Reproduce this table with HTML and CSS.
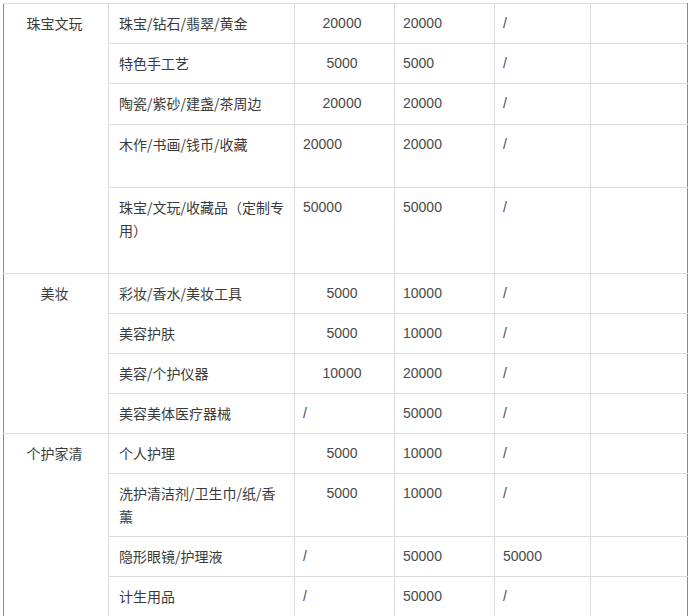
FILE: index.html
```html
<!DOCTYPE html>
<html lang="zh-CN">
<head>
<meta charset="utf-8">
<title>类目保证金</title>
<link rel="stylesheet" href="styles.css">
</head>
<body>
<div class="wrap">
<table class="tbl">
  <colgroup>
    <col class="c1"><col class="c2"><col class="c3"><col class="c4"><col class="c5"><col class="c6">
  </colgroup>
  <tbody>
    <tr>
      <td class="cat" rowspan="5">珠宝文玩</td>
      <td class="item">珠宝/钻石/翡翠/黄金</td>
      <td class="num mid">20000</td>
      <td class="num">20000</td>
      <td class="num">/</td>
      <td></td>
    </tr>
    <tr>
      <td class="item">特色手工艺</td>
      <td class="num mid">5000</td>
      <td class="num">5000</td>
      <td class="num">/</td>
      <td></td>
    </tr>
    <tr>
      <td class="item plus1">陶瓷/紫砂/建盏/茶周边</td>
      <td class="num mid">20000</td>
      <td class="num">20000</td>
      <td class="num">/</td>
      <td></td>
    </tr>
    <tr>
      <td class="item extra">木作/书画/钱币/收藏</td>
      <td class="num">20000</td>
      <td class="num">20000</td>
      <td class="num">/</td>
      <td></td>
    </tr>
    <tr>
      <td class="item extra">珠宝/文玩/收藏品（定制专用）</td>
      <td class="num">50000</td>
      <td class="num">50000</td>
      <td class="num">/</td>
      <td></td>
    </tr>
    <tr>
      <td class="cat" rowspan="4">美妆</td>
      <td class="item">彩妆/香水/美妆工具</td>
      <td class="num mid">5000</td>
      <td class="num">10000</td>
      <td class="num">/</td>
      <td></td>
    </tr>
    <tr>
      <td class="item">美容护肤</td>
      <td class="num mid">5000</td>
      <td class="num">10000</td>
      <td class="num">/</td>
      <td></td>
    </tr>
    <tr>
      <td class="item">美容/个护仪器</td>
      <td class="num mid">10000</td>
      <td class="num">20000</td>
      <td class="num">/</td>
      <td></td>
    </tr>
    <tr>
      <td class="item">美容美体医疗器械</td>
      <td class="num">/</td>
      <td class="num">50000</td>
      <td class="num">/</td>
      <td></td>
    </tr>
    <tr>
      <td class="cat" rowspan="4">个护家清</td>
      <td class="item">个人护理</td>
      <td class="num mid">5000</td>
      <td class="num">10000</td>
      <td class="num">/</td>
      <td></td>
    </tr>
    <tr>
      <td class="item">洗护清洁剂/卫生巾/纸/香薰</td>
      <td class="num mid">5000</td>
      <td class="num">10000</td>
      <td class="num">/</td>
      <td></td>
    </tr>
    <tr>
      <td class="item">隐形眼镜/护理液</td>
      <td class="num">/</td>
      <td class="num">50000</td>
      <td class="num">50000</td>
      <td></td>
    </tr>
    <tr>
      <td class="item">计生用品</td>
      <td class="num">/</td>
      <td class="num">50000</td>
      <td class="num">/</td>
      <td></td>
    </tr>
  </tbody>
</table>
</div>
</body>
</html>
```

FILE: styles.css
```css
html, body {
  margin: 0;
  padding: 0;
  background: #ffffff;
}

.wrap {
  padding: 3px 0 0 3px;
}

.tbl {
  border-collapse: collapse;
  table-layout: fixed;
  width: 684px;
  font-family: "Noto Sans CJK SC", "Liberation Sans", sans-serif;
  font-size: 14px;
  line-height: 23px;
  color: #3a3a3a;
}

.c1 { width: 105px; }
.c2 { width: 186px; }
.c3 { width: 100px; }
.c4 { width: 100px; }
.c5 { width: 96px; }
.c6 { width: 97px; }

.tbl td {
  border: 1px solid #dcdcdc;
  padding: 8px 10px;
  vertical-align: top;
  text-align: left;
}

.tbl td:first-child.cat {
  border-left: 1px solid #6d8cb8;
}

.tbl td:last-child {
  border-right: 1px solid #6d8cb8;
}

.tbl td.cat {
  text-align: center;
  padding: 8px 13px 8px 10px;
}

.tbl td.item {
  padding-right: 8px;
}

.tbl td.plus1 {
  padding-bottom: 9px;
}

.tbl td.extra {
  padding-bottom: 31px;
}

.tbl td.num {
  font-family: "Liberation Sans", "Noto Sans CJK SC", sans-serif;
  color: #4a4a4a;
  padding-left: 8px;
}

.tbl td.mid {
  text-align: center;
  padding-left: 10px;
  padding-right: 15px;
}
```
